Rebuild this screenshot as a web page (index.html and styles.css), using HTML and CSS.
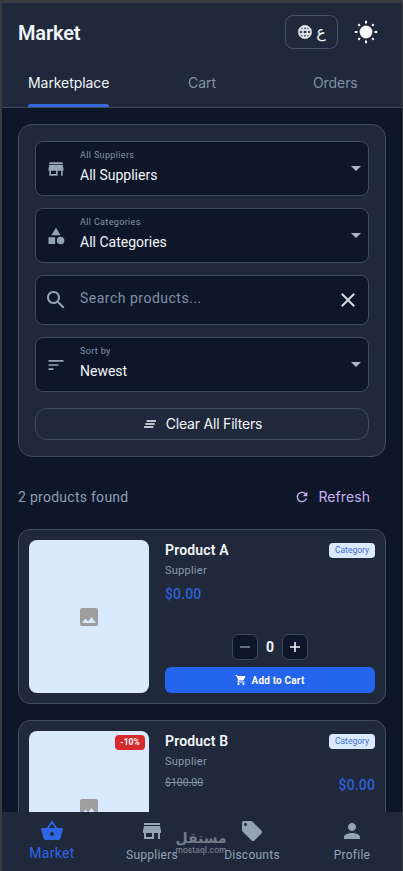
FILE: index.html
```
<!DOCTYPE html>
<html lang="en">
<head>
<meta charset="utf-8">
<title>Market</title>
<link rel="stylesheet" href="styles.css">
</head>
<body>
<svg width="0" height="0" class="defs">
  <defs>
    <symbol id="store" viewBox="0 0 24 24"><path d="M20 4H4v2h16V4zm1 10v-2l-1-5H4l-1 5v2h1v6h10v-6h4v6h2v-6h1zm-9 4H6v-4h6v4z"/></symbol>
    <symbol id="image" viewBox="0 0 24 24"><path d="M21 19V5c0-1.100-.9-2-2-2H5c-1.100 0-2 .9-2 2v14c0 1.100.9 2 2 2h14c1.100 0 2-.9 2-2z"/><path class="hills" d="M8.500 13.500l2.500 3.010L14.500 12l4.500 6H5z"/></symbol>
    <symbol id="caret" viewBox="0 0 10 5"><path d="M0 0h10L5 5z"/></symbol>
  </defs>
</svg>
<div class="app">
  <header class="header">
    <div class="topbar">
      <h1 class="title">Market</h1>
      <button class="lang">
        <svg class="i16" viewBox="0 0 24 24"><path d="M11.990 2C6.470 2 2 6.480 2 12s4.470 10 9.990 10C17.520 22 22 17.520 22 12S17.520 2 11.990 2zm6.930 6h-2.950c-.32-1.250-.78-2.450-1.380-3.560 1.840.63 3.370 1.910 4.330 3.560zM12 4.040c.83 1.200 1.480 2.530 1.910 3.960h-3.820c.43-1.430 1.080-2.760 1.910-3.960zM4.260 14C4.100 13.360 4 12.690 4 12s.1-1.360.26-2h3.380c-.08.66-.14 1.320-.14 2s.06 1.340.14 2H4.260zm.82 2h2.950c.32 1.250.78 2.450 1.380 3.560-1.840-.63-3.370-1.900-4.330-3.560zm2.950-8H5.080c.96-1.660 2.490-2.930 4.330-3.560C8.810 5.550 8.350 6.750 8.030 8zM12 19.960c-.83-1.200-1.480-2.530-1.910-3.960h3.820c-.43 1.430-1.080 2.760-1.910 3.960zM14.340 14H9.660c-.09-.66-.16-1.320-.16-2s.07-1.350.16-2h4.680c.09.65.16 1.320.16 2s-.07 1.340-.16 2zm.25 5.560c.6-1.110 1.060-2.310 1.380-3.560h2.950c-.96 1.650-2.490 2.930-4.330 3.560zM16.360 14c.08-.66.14-1.320.14-2s-.06-1.340-.14-2h3.380c.16.64.26 1.310.26 2s-.1 1.360-.26 2h-3.380z"/></svg>
        <span lang="ar">ع</span>
      </button>
      <svg class="sun" viewBox="0 0 24 24"><circle cx="12" cy="12" r="6.400"/><path d="M12 .8v2.700M12 20.500v2.700M.8 12h2.700M20.500 12h2.700M4.300 4.300l1.600 1.600M18.100 18.100l1.600 1.600M4.300 19.700l1.600-1.600M18.100 5.900l1.600-1.600"/></svg>
    </div>
    <nav class="tabs">
      <a class="tab tab-on"><span>Marketplace</span></a>
      <a class="tab"><span>Cart</span></a>
      <a class="tab"><span>Orders</span></a>
    </nav>
  </header>

  <main class="content">
    <section class="filters">
      <div class="field">
        <svg class="lead"><use href="#store"/></svg>
        <div class="texts"><small>All Suppliers</small><b>All Suppliers</b></div>
        <svg class="caret"><use href="#caret"/></svg>
      </div>
      <div class="field">
        <svg class="lead" viewBox="0 0 24 24"><path d="M12 2l-5.500 9h11zM17.500 13a4.500 4.500 0 1 0 0 9 4.500 4.500 0 1 0 0-9zM3 21.500h8v-8H3z"/></svg>
        <div class="texts"><small>All Categories</small><b>All Categories</b></div>
        <svg class="caret"><use href="#caret"/></svg>
      </div>
      <div class="field search">
        <svg class="lead big" viewBox="0 0 24 24"><path d="M15.500 14h-.79l-.28-.27C15.410 12.590 16 11.110 16 9.500 16 5.910 13.090 3 9.500 3S3 5.910 3 9.500 5.910 16 9.500 16c1.610 0 3.090-.59 4.230-1.570l.27.28v.79l5 4.990L20.490 19l-4.990-5zm-6 0C7.010 14 5 11.990 5 9.500S7.010 5 9.500 5 14 7.010 14 9.500 11.990 14 9.500 14z"/></svg>
        <span class="placeholder">Search products...</span>
        <svg class="close" viewBox="0 0 24 24"><path d="M19 6.410L17.590 5 12 10.590 6.410 5 5 6.410 10.590 12 5 17.590 6.410 19 12 13.410 17.590 19 19 17.590 13.410 12z"/></svg>
      </div>
      <div class="field">
        <svg class="lead" viewBox="0 0 24 24"><path d="M3 18h6v-2H3v2zM3 6v2h18V6H3zm0 7h12v-2H3v2z"/></svg>
        <div class="texts"><small>Sort by</small><b>Newest</b></div>
        <svg class="caret"><use href="#caret"/></svg>
      </div>
      <button class="clear">
        <svg class="i16" viewBox="0 0 24 24"><path d="M5 13.200h14v-2.400H5v2.400zm-2 4.400h14v-2.400H3v2.400zM7 6.400v2.400h14V6.400H7z"/></svg>
        <span>Clear All Filters</span>
      </button>
    </section>

    <div class="summary">
      <span class="count">2 products found</span>
      <span class="refresh">
        <svg class="i16" viewBox="0 0 24 24"><path d="M17.650 6.350C16.200 4.900 14.210 4 12 4c-4.420 0-7.990 3.580-7.990 8s3.570 8 7.990 8c3.730 0 6.840-2.550 7.730-6h-2.080c-.82 2.330-3.040 4-5.650 4-3.310 0-6-2.690-6-6s2.690-6 6-6c1.660 0 3.140.69 4.220 1.780L13 11h7V4l-2.350 2.350z"/></svg>
        <span>Refresh</span>
      </span>
    </div>

    <article class="card">
      <div class="thumb"><svg class="pic"><use href="#image"/></svg></div>
      <div class="info">
        <div class="head"><h2>Product A</h2><span class="tag">Category</span></div>
        <p class="supplier">Supplier</p>
        <div class="prices"><strong>$0.00</strong></div>
        <div class="stepper">
          <button class="step off"><svg viewBox="0 0 16 16"><path d="M3 8h10"/></svg></button>
          <span>0</span>
          <button class="step"><svg viewBox="0 0 16 16"><path d="M3 8h10M8 3v10"/></svg></button>
        </div>
        <button class="add">
          <svg viewBox="0 0 24 24"><path d="M7 18c-1.100 0-1.990.9-1.990 2S5.900 22 7 22s2-.9 2-2-.9-2-2-2zM1 2v2h2l3.600 7.590-1.350 2.450c-.16.28-.25.61-.25.96 0 1.100.9 2 2 2h12v-2H7.420c-.14 0-.25-.11-.25-.25l.03-.12.9-1.630h7.450c.75 0 1.410-.41 1.750-1.030l3.580-6.490A1 1 0 0 0 20 4H5.210l-.94-2H1zm16 16c-1.100 0-1.990.9-1.990 2s.89 2 1.990 2 2-.9 2-2-.9-2-2-2z"/></svg>
          <span>Add to Cart</span>
        </button>
      </div>
    </article>

    <article class="card">
      <div class="thumb"><svg class="pic"><use href="#image"/></svg><span class="sale">-10%</span></div>
      <div class="info">
        <div class="head"><h2>Product B</h2><span class="tag">Category</span></div>
        <p class="supplier">Supplier</p>
        <div class="prices sale-prices"><s>$100.00</s><strong>$0.00</strong></div>
      </div>
    </article>
  </main>

  <nav class="bottom">
    <a class="item on"><svg viewBox="0 0 24 24"><path d="M17.210 9l-4.380-6.560c-.19-.28-.51-.42-.83-.42-.32 0-.64.14-.83.430L6.790 9H2c-.55 0-1 .45-1 1 0 .09.010.18.040.270l2.540 9.270c.23.840 1 1.460 1.920 1.460h13c.92 0 1.690-.62 1.930-1.460l2.540-9.270L23 10c0-.55-.45-1-1-1h-4.790zM9 9l3-4.400L15 9H9zm3 8c-1.100 0-2-.9-2-2s.9-2 2-2 2 .9 2 2-.9 2-2 2z"/></svg><span>Market</span></a>
    <a class="item"><svg><use href="#store"/></svg><span>Suppliers</span></a>
    <a class="item"><svg viewBox="0 0 24 24"><path d="M21.410 11.580l-9-9C12.050 2.220 11.550 2 11 2H4c-1.100 0-2 .9-2 2v7c0 .55.22 1.050.59 1.420l9 9c.36.36.86.58 1.410.58.55 0 1.050-.22 1.410-.59l7-7c.37-.36.59-.86.59-1.410 0-.55-.23-1.060-.59-1.420zM5.500 7C4.670 7 4 6.330 4 5.500S4.670 4 5.500 4 7 4.670 7 5.500 6.330 7 5.500 7z"/></svg><span>Discounts</span></a>
    <a class="item"><svg viewBox="0 0 24 24"><path d="M12 12c2.210 0 4-1.790 4-4s-1.790-4-4-4-4 1.790-4 4 1.790 4 4 4zm0 2c-2.670 0-8 1.340-8 4v2h16v-2c0-2.660-5.330-4-8-4z"/></svg><span>Profile</span></a>
    <div class="mark"><span class="mark-ar" lang="ar">مستقل</span><span class="mark-en">mostaql.com</span></div>
  </nav>
</div>
</body>
</html>
```
FILE: styles.css
```
* { box-sizing: border-box; }
body { margin: 0; background: #0e172a; font-family: Roboto, "DejaVu Sans", sans-serif; }
.defs { position: absolute; }
svg { fill: currentColor; flex: none; display: block; }
button { font: inherit; color: inherit; padding: 0; margin: 0; }
h1, h2, p { margin: 0; }
.app { width: 403px; height: 871px; border: solid #3a3b3d; border-width: 3px 1px 0 2px; display: flex; flex-direction: column; overflow: hidden; }
.i16 { width: 16px; height: 16px; }

.header { flex: none; height: 105px; background: #1f293b; border-bottom: 1px solid #414b5b; display: flex; flex-direction: column; }
.topbar { height: 58px; display: flex; align-items: center; padding: 0 24px 0 16px; }
.title { font-size: 20px; font-weight: 600; letter-spacing: -0.15px; color: #f1f5f9; flex: 1; padding-top: 1px; }
.lang { width: 53px; height: 34px; border: 1px solid #475264; border-radius: 8px; background: none; color: #f1f5f9; display: flex; align-items: center; justify-content: center; gap: 3px; margin-right: 16px; }
.lang span { font: 16px/18px "DejaVu Sans", sans-serif; }
.lang svg { stroke: currentColor; stroke-width: 0.500; }
.sun { width: 24px; height: 24px; color: #f8fafc; }
.sun path { stroke: currentColor; stroke-width: 2; }
.tabs { flex: 1; display: flex; }
.tab { flex: 1; display: flex; justify-content: center; font: 400 14px/44px Inter, sans-serif; color: #8390a5; }
.tab span { height: 46px; letter-spacing: -0.08px; }
.tab-on { color: #f1f5f9; }
.tab-on span { background: radial-gradient(circle at 3px 3px, #3366d6 3px, transparent 3.500px) left bottom / 3px 3px no-repeat, radial-gradient(circle at 0 3px, #3366d6 3px, transparent 3.500px) right bottom / 3px 3px no-repeat, linear-gradient(#3366d6, #3366d6) center bottom / calc(100% - 6px) 3px no-repeat; }

.content { flex: 1; min-height: 0; overflow: hidden; padding: 16px 16px 0; display: flex; flex-direction: column; }
.filters { flex: none; width: 368px; height: 333px; padding: 16px; border: 1px solid #414c5d; border-radius: 14px; background: #1f293b; display: flex; flex-direction: column; }
.field { height: 55px; margin-bottom: 12px; flex: none; border: 1px solid #414c5d; border-radius: 8px; background: #0e172a; display: flex; align-items: center; padding: 0 7px 0 10px; color: #94a3b8; }
.field.search { height: 50px; padding-right: 8px; }
.lead { width: 20px; height: 20px; margin-right: 14px; }
.lead.big { width: 24px; height: 24px; margin: 0 12px 0 -2px; }
.texts { flex: 1; display: flex; flex-direction: column; padding-bottom: 5px; }
.texts small { font-size: 9px; line-height: 14px; letter-spacing: 0.35px; color: #8794a9; padding-top: 1px; margin-bottom: 3px; }
.texts b { font-size: 14px; line-height: 20px; font-weight: 400; color: #f1f5f9; }
.caret { width: 10px; height: 5px; color: #aeb7c5; }
.placeholder { flex: 1; font-size: 14px; letter-spacing: 0.5px; color: #8190a6; padding-bottom: 4px; }
.close { width: 24px; height: 24px; color: #d5d7e0; }
.clear { margin-top: 4px; height: 32px; flex: none; border: 1px solid #414c5d; border-radius: 12px; background: none; color: #f1f5f9; display: flex; align-items: center; justify-content: center; gap: 8px; }
.clear span { font: 400 14px/20px Inter, sans-serif; letter-spacing: -0.2px; }

.summary { flex: none; height: 72px; width: 352px; padding-top: 8px; display: flex; align-items: center; justify-content: space-between; }
.count { font-size: 14px; letter-spacing: 0.27px; color: #8f9db2; }
.refresh { display: flex; align-items: center; gap: 8px; color: #c9b2f2; font: 400 14px/20px Inter, sans-serif; letter-spacing: 0.08px; }

.card { flex: none; width: 368px; height: 175px; margin-bottom: 16px; padding: 10px; border: 1px solid #414c5d; border-radius: 12px; background: #1f293b; display: flex; gap: 16px; }
.thumb { position: relative; width: 120px; height: 153px; border-radius: 8px; background: #dbe9fe; display: flex; align-items: center; justify-content: center; }
.pic { width: 24px; height: 24px; color: #9e9e9e; }
.hills { fill: #dbe9fe; }
.sale { position: absolute; top: 4px; right: 4px; width: 30px; height: 15px; border-radius: 4px; background: #d62a2d; color: #fff; font-size: 8.500px; line-height: 15px; font-weight: 700; text-align: center; }
.info { flex: 1; display: flex; flex-direction: column; }
.head { height: 20px; display: flex; justify-content: space-between; align-items: center; }
.head h2 { font-size: 14px; line-height: 20px; font-weight: 600; letter-spacing: 0.15px; color: #f1f5f9; }
.tag { width: 46px; height: 15px; border-radius: 4px; background: #dbe9fe; color: #4470cf; font-size: 8.500px; line-height: 15px; text-align: center; letter-spacing: 0; }
.supplier { font-size: 11px; line-height: 14px; letter-spacing: 0.25px; color: #8d9bb0; margin-top: 4px; }
.prices { height: 20px; margin-top: 6px; display: flex; color: #2e60d8; font-size: 14px; line-height: 20px; }
.prices strong { font-weight: 500; letter-spacing: 0.15px; }
.sale-prices { justify-content: space-between; }
.sale-prices s { color: #8492a7; font-size: 10.500px; line-height: 15px; }
.stepper { display: flex; align-items: center; justify-content: center; margin-top: 30px; color: #f1f5f9; }
.stepper span { width: 24px; text-align: center; font-size: 14px; font-weight: 700; }
.step { width: 26px; height: 26px; border: 1px solid #3d4859; border-radius: 6px; background: #0e172a; display: flex; align-items: center; justify-content: center; }
.step svg { width: 16px; height: 16px; stroke: currentColor; stroke-width: 1.600; }
.step.off { color: #77859a; }
.add { height: 26px; margin-top: 7px; border: 0; border-radius: 6px; background: #2463eb; color: #fff; display: flex; align-items: center; justify-content: center; gap: 4px; font-size: 10px; font-weight: 700; letter-spacing: 0.18px; }
.add svg { width: 12px; height: 12px; }

.bottom { position: relative; flex: none; height: 59px; background: #1f293b; display: flex; }
.item { flex: 1; display: flex; flex-direction: column; align-items: center; padding-top: 7px; color: #94a3b8; font-size: 12px; line-height: 16px; letter-spacing: 0.25px; }
.item svg { width: 24px; height: 24px; margin-bottom: 4px; }
.item.on { color: #2e65e4; font-size: 14px; letter-spacing: 0.3px; }
.item.on svg { margin-bottom: 2px; }
.mark { position: absolute; left: 174px; top: 18px; width: 50px; height: 30px; display: flex; flex-direction: column; align-items: center; color: #737b88; }
.mark-ar { font: 700 14px/16px "DejaVu Sans", sans-serif; }
.mark-en { font-size: 8.500px; line-height: 9px; font-weight: 500; letter-spacing: 0.1px; }
```
